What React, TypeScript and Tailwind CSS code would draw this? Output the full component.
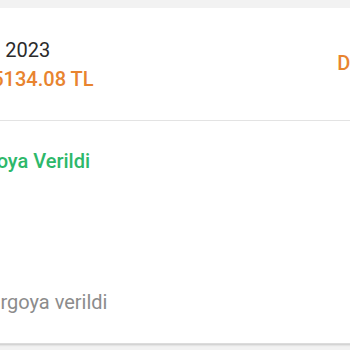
export default function App() {
  return (
    <div className="w-[350px] h-[350px] overflow-hidden bg-[#f2f2f2] font-['Roboto',sans-serif]">
      <div className="-ml-[68px] w-[456px] pt-[8px]">
        {/* order summary row */}
        <div className="flex items-center justify-between bg-white pt-[30px] pb-[29px] border-b border-[#e6e6e6]">
          <div className="flex flex-col">
            <span className="text-[20px] leading-[24px] text-[#2b2b2b]">Haziran 2023</span>
            <span className="ml-[3px] mt-[5px] text-[20px] leading-[24px] font-medium text-[#e8842f]">Tutar: 5134.08 TL</span>
          </div>
          <span className="mt-[-3px] text-[20px] leading-[24px] font-medium text-[#e8842f]">Detay</span>
        </div>

        {/* shipping status */}
        <div className="flex flex-col bg-white pt-[28px] pb-[29px] shadow-[0_1px_2px_rgba(0,0,0,0.18)] border-b border-[#dcdcdc]">
          <span className="ml-[23px] text-[20px] leading-[24px] font-medium text-[#2db86a]">Kargoya Verildi</span>
          <span className="ml-[45px] mt-[117px] text-[20px] leading-[24px] text-[#8c8c8c]">Kargoya verildi</span>
        </div>
      </div>
    </div>
  );
}
